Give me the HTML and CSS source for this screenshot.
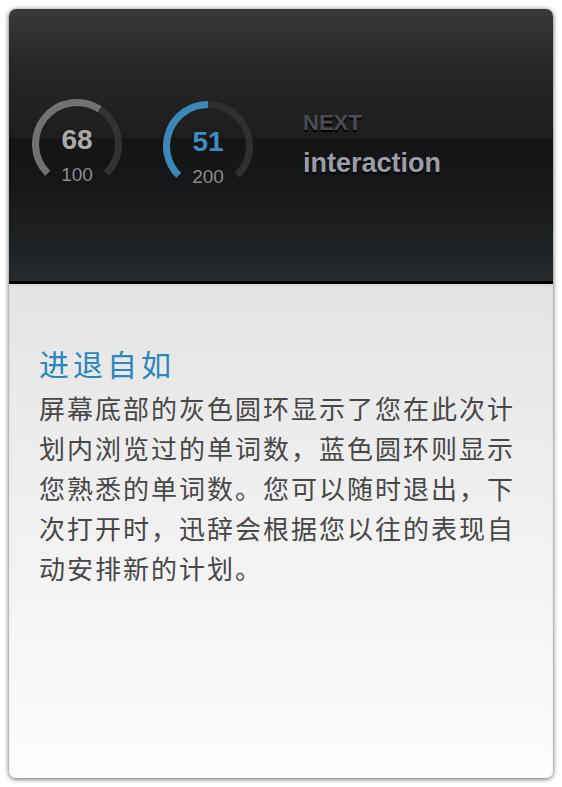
FILE: index.html
```html
<!DOCTYPE html>
<html lang="zh-CN">
<head>
<meta charset="utf-8">
<link rel="stylesheet" href="styles.css">
</head>
<body>
<div class="card">
  <header class="top">
    <div class="ring">
      <svg class="ring-svg" width="90" height="90" viewBox="0 0 90 90">
        <path d="M15.66 74.34 A41.5 41.5 0 1 1 74.34 74.34" fill="none" stroke="#323232" stroke-width="7"/>
        <path d="M15.66 74.34 A41.5 41.5 0 0 1 67.60 10.19" fill="none" stroke="#727272" stroke-width="7"/>
      </svg>
      <div class="ring-text">
        <span class="num num-gray">68</span>
        <span class="total">100</span>
      </div>
    </div>
    <div class="ring ring-second">
      <svg class="ring-svg" width="90" height="90" viewBox="0 0 90 90">
        <path d="M15.66 74.34 A41.5 41.5 0 1 1 74.34 74.34" fill="none" stroke="#2f2f2f" stroke-width="7"/>
        <path d="M15.66 74.34 A41.5 41.5 0 0 1 45 3.5" fill="none" stroke="#3b87b7" stroke-width="7"/>
      </svg>
      <div class="ring-text">
        <span class="num num-blue">51</span>
        <span class="total">200</span>
      </div>
    </div>
    <div class="next">
      <div class="next-label">NEXT</div>
      <div class="next-word">interaction</div>
    </div>
  </header>
  <section class="content">
    <h1 class="title">进退自如</h1>
    <p class="desc">屏幕底部的灰色圆环显示了您在此次计划内浏览过的单词数，蓝色圆环则显示您熟悉的单词数。您可以随时退出，下次打开时，迅辞会根据您以往的表现自动安排新的计划。</p>
  </section>
</div>
</body>
</html>
```

FILE: styles.css
```css
html, body {
  margin: 0;
  padding: 0;
  background: #ffffff;
}
body {
  padding: 9px;
  font-family: "Liberation Sans", Arial, sans-serif;
}
.card {
  width: 544px;
  height: 769px;
  border-radius: 7px;
  overflow: hidden;
  box-shadow: 0 1px 5px rgba(0, 0, 0, 0.65);
  display: flex;
  flex-direction: column;
  background: #fff;
}
.top {
  box-sizing: border-box;
  height: 275px;
  flex: none;
  padding: 90px 0 0 23px;
  display: flex;
  align-items: flex-start;
  border-bottom: 3px solid #050505;
  background:
    linear-gradient(180deg, #3a3a3a 0px, #262626 60px, #1d1d1d 129px, #141414 129px, #151617 170px, #1f2224 240px, #272b2e 272px);
}
.ring {
  display: grid;
  width: 90px;
  height: 90px;
}
.ring > * {
  grid-area: 1 / 1;
}
.ring-second {
  margin-left: 41px;
  margin-top: 2px;
}
.ring-svg {
  display: block;
}
.ring-text {
  display: flex;
  flex-direction: column;
  align-items: center;
  padding-top: 27px;
}
.num {
  font-weight: bold;
  font-size: 28px;
  line-height: 28px;
}
.num-gray {
  color: #a9a9a9;
}
.num-blue {
  color: #3f8dc0;
}
.total {
  margin-top: 11px;
  font-size: 19px;
  line-height: 19px;
  color: #8c8c8c;
}
.next {
  margin-left: 50px;
  margin-top: 13px;
  text-shadow: 0 2px 1px #000;
  font-weight: bold;
}
.next-label {
  font-size: 22px;
  line-height: 22px;
  color: #4b4c53;
}
.next-word {
  margin-top: 16px;
  font-size: 27px;
  line-height: 27px;
  color: #9c9da7;
}
.content {
  flex: 1;
  padding: 59px 0 0 30px;
  background: linear-gradient(180deg, #e4e4e4 0%, #f0f0f0 45%, #fdfdfd 100%);
  box-shadow: inset 0 2px 3px rgba(0, 0, 0, 0.08);
  font-family: "Noto Sans CJK SC", "Liberation Sans", sans-serif;
}
.title {
  margin: 0 0 5px;
  font-weight: normal;
  font-size: 30px;
  line-height: 40px;
  letter-spacing: 4px;
  color: #2a87bd;
}
.desc {
  margin: 0;
  width: 480px;
  font-size: 26px;
  line-height: 40px;
  letter-spacing: 2px;
  color: #474747;
}
```
